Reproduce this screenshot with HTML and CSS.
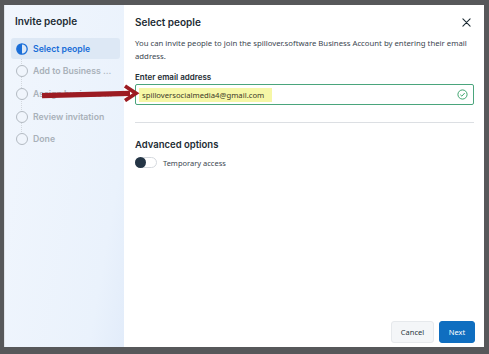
FILE: index.html
```html
<!DOCTYPE html>
<html>
<head>
<meta charset="utf-8">
<link rel="stylesheet" href="styles.css">
</head>
<body>
<div class="screen">
  <div class="modal">
    <aside class="sidebar">
      <div class="side-title">Invite people</div>
      <ol class="steps">
        <li class="step active">
          <svg class="step-icon" viewBox="0 0 12 12" width="12" height="12"><circle cx="6" cy="6" r="5.2" fill="none" stroke="#1a6ed8" stroke-width="1.3"/><path d="M6 0.8 A5.2 5.2 0 0 0 6 11.2 Z" fill="#1a6ed8"/></svg>
          <span>Select people</span>
        </li>
        <li class="step"><span class="ring"></span><span>Add to Business ...</span></li>
        <li class="step"><span class="ring"></span><span>Assign business ...</span></li>
        <li class="step"><span class="ring"></span><span>Review invitation</span></li>
        <li class="step"><span class="ring"></span><span>Done</span></li>
      </ol>
    </aside>
    <main class="content">
      <div class="header">
        <h1 class="title">Select people</h1>
        <svg class="close" viewBox="0 0 10 10" width="9" height="9"><path d="M1 1 L9 9 M9 1 L1 9" stroke="#1c2b33" stroke-width="1.2" stroke-linecap="round"/></svg>
      </div>
      <p class="desc">You can invite people to join the spillover.software Business Account by entering their email address.</p>
      <label class="label">Enter email address</label>
      <div class="input">
        <span class="value">spilloversocialmedia4@gmail.com</span>
        <svg class="check" viewBox="0 0 12 12" width="11" height="11"><circle cx="6" cy="6" r="5" fill="none" stroke="#2e9c63" stroke-width="1"/><path d="M3.6 6.2 L5.3 7.8 L8.4 4.4" fill="none" stroke="#2e9c63" stroke-width="1"/></svg>
      </div>
      <hr class="sep">
      <h2 class="subtitle">Advanced options</h2>
      <div class="toggle-row">
        <span class="toggle"><span class="knob"></span></span>
        <span class="toggle-label">Temporary access</span>
      </div>
      <div class="footer">
        <button class="btn cancel">Cancel</button>
        <button class="btn next">Next</button>
      </div>
    </main>
    <svg class="arrow" viewBox="0 0 100 20" width="100" height="20"><path d="M0 13.6 L88 11.4" stroke="#9c1b22" stroke-width="5.4" stroke-linecap="butt"/><path d="M83 4 L94 11.3 L83 18.5" fill="none" stroke="#9c1b22" stroke-width="3.8" stroke-linejoin="miter"/></svg>
  </div>
</div>
</body>
</html>
```
FILE: styles.css
```css
* { box-sizing: border-box; }
html, body { margin: 0; padding: 0; }
body {
  width: 489px;
  height: 354px;
  background: #57585a;
  font-family: "Noto Sans", "Liberation Sans", sans-serif;
  color: #1c2b33;
  overflow: hidden;
}
.screen {
  padding: 5px 5px 7px 4px;
  height: 354px;
}
.modal {
  position: relative;
  display: flex;
  width: 480px;
  height: 342px;
  background: #fff;
}
.sidebar {
  width: 120px;
  flex: none;
  background: linear-gradient(100deg, #f1f6fd 0%, #eaf2fc 80%, #e2ecfa 100%);
  padding: 9px 4px 0 6px;
  border-left: 1px solid #dfe3e8;
}
.side-title {
  font-family: Inter, "Noto Sans", sans-serif;
  font-weight: 600;
  font-size: 10px;
  color: #1c2b33;
  padding-left: 4px;
  height: 14px;
  line-height: 14px;
}
.steps {
  list-style: none;
  margin: 10px 0 0 0;
  padding: 0;
  position: relative;
}
.steps::before {
  content: "";
  position: absolute;
  left: 10px;
  top: 18px;
  bottom: 18px;
  border-left: 1.5px dotted #d3d8de;
}
.step {
  position: relative;
  display: flex;
  align-items: center;
  gap: 5px;
  height: 21px;
  margin-bottom: 1.7px;
  padding-left: 5px;
  font-family: Inter, "Noto Sans", sans-serif;
  font-weight: 600;
  font-size: 8.7px;
  color: #a9b1b9;
  white-space: nowrap;
  border-radius: 3px;
}
.step.active {
  background: #dde8f5;
  color: #1a6ed8;
}
.step-icon { flex: none; }
.ring {
  flex: none;
  width: 12px;
  height: 12px;
  border: 1.3px solid #b3bac2;
  border-radius: 50%;
  background: #f0f5fc;
}
.content {
  flex: 1;
  display: flex;
  flex-direction: column;
  padding: 11px 9px 4px 11px;
}
.header {
  display: flex;
  justify-content: space-between;
  align-items: center;
  height: 12px;
  padding-right: 4px;
}
.title {
  margin: 0;
  font-family: Inter, "Noto Sans", sans-serif;
  font-weight: 600;
  font-size: 10px;
  color: #1c2b33;
}
.desc {
  margin: 9px 0 0 0;
  font-size: 7.75px;
  line-height: 13px;
  color: #3b4650;
}
.label {
  display: block;
  margin-top: 8px;
  font-family: Inter, "Noto Sans", sans-serif;
  font-weight: 600;
  font-size: 8px;
  color: #1c2b33;
  line-height: 12px;
}
.input {
  margin-top: 1px;
  margin-right: 1px;
  height: 21px;
  border: 1px solid #4aa57c;
  border-radius: 2px;
  display: flex;
  align-items: center;
  justify-content: space-between;
  padding: 0 5px 0 3px;
}
.value {
  background: #f6f7a6;
  font-size: 7.7px;
  color: #3c3a26;
  padding: 3px 8px 3px 3px;
  line-height: 8px;
}
.sep {
  margin: 17px 1px 0 0;
  border: 0;
  border-top: 1px solid #dcdfe3;
}
.subtitle {
  margin: 16px 0 0 0;
  font-family: Inter, "Noto Sans", sans-serif;
  font-weight: 600;
  font-size: 9.5px;
  color: #1c2b33;
  line-height: 12px;
}
.toggle-row {
  display: flex;
  align-items: center;
  gap: 6px;
  margin-top: 6px;
}
.toggle {
  width: 22px;
  height: 11px;
  border: 1px solid #d5d9de;
  border-radius: 6px;
  display: flex;
  align-items: center;
  background: #fff;
}
.knob {
  width: 11px;
  height: 11px;
  margin-left: -1px;
  border-radius: 50%;
  background: #243545;
}
.toggle-label {
  font-size: 7.5px;
  color: #3b4650;
}
.footer {
  margin-top: auto;
  display: flex;
  justify-content: flex-end;
  gap: 5px;
}
.btn {
  height: 22px;
  border-radius: 3px;
  font-family: "Noto Sans", sans-serif;
  font-size: 7.5px;
  padding: 0;
}
.cancel {
  width: 43px;
  background: #f4f6f8;
  border: 1px solid #e6e9ec;
  color: #2b3640;
}
.next {
  width: 36px;
  background: #0f6ec0;
  border: 1px solid #0f6ec0;
  color: #fff;
}
.arrow {
  position: absolute;
  left: 38px;
  top: 77px;
}
```
